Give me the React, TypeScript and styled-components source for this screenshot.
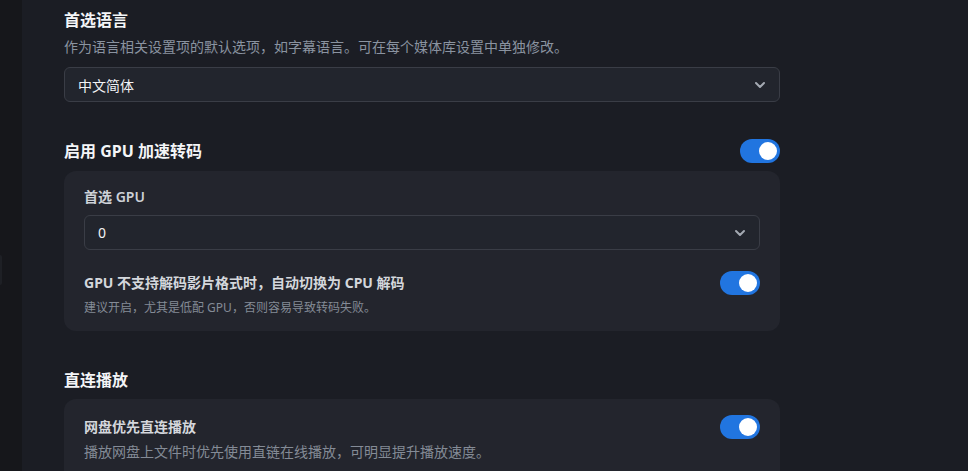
import styled, { createGlobalStyle } from "styled-components";

const GlobalStyle = createGlobalStyle`
  html, body {
    margin: 0;
    padding: 0;
    background: #1b1d24;
  }
  body {
    font-family: "Noto Sans", "Noto Sans CJK SC", sans-serif;
    color: #f2f3f5;
  }
`;

const Page = styled.div`
  display: flex;
  width: 968px;
  height: 471px;
  overflow: hidden;
  background: #1b1d24;
`;

const Sidebar = styled.div`
  width: 22px;
  flex-shrink: 0;
  background: #16171b;
  display: flex;
  flex-direction: column;
`;

const SideItem = styled.div`
  margin-top: 255px;
  width: 2px;
  height: 30px;
  border-radius: 0 3px 3px 0;
  background: #1e2025;
`;

const Main = styled.div`
  padding: 8px 0 0 42px;
  width: 716px;
  display: flex;
  flex-direction: column;

  & > * {
    flex-shrink: 0;
  }
`;

const Heading = styled.h2`
  margin: 0;
  font-size: 16px;
  line-height: 24px;
  font-weight: 700;
  color: #f4f5f7;
`;

const HeadingRow = styled.div`
  display: flex;
  align-items: center;
  justify-content: space-between;
  margin-top: 37px;
`;

const Description = styled.p`
  margin: 6px 0 0;
  font-size: 14px;
  line-height: 18px;
  color: #8a93a0;
`;

const SelectBox = styled.div<{ $mt?: number }>`
  margin-top: ${(p) => p.$mt ?? 11}px;
  height: 35px;
  flex-shrink: 0;
  box-sizing: border-box;
  border: 1px solid #3a3d46;
  border-radius: 6px;
  background: #22252d;
  display: flex;
  align-items: center;
  justify-content: space-between;
  padding: 0 11px 0 13px;
  font-size: 14px;
  color: #f2f3f5;
`;

const Card = styled.div`
  margin-top: 8px;
  background: #23252d;
  border-radius: 12px;
  padding: 17px 20px 14px;
  display: flex;
  flex-direction: column;

  & > * {
    flex-shrink: 0;
  }
`;

const CardLower = styled(Card)`
  margin-top: 7px;
  padding-top: 16px;
  height: 80px;
`;

const FieldLabel = styled.div`
  font-size: 14px;
  line-height: 18px;
  font-weight: 600;
  color: #cdd1d7;
`;

const OptionRow = styled.div<{ $mt?: number }>`
  margin-top: ${(p) => p.$mt ?? 0}px;
  display: flex;
  justify-content: space-between;
  align-items: flex-start;
`;

const OptionText = styled.div`
  display: flex;
  flex-direction: column;
`;

const OptionTitle = styled.div`
  font-size: 14px;
  line-height: 24px;
  font-weight: 700;
  color: #d4d7dc;
`;

const OptionDesc = styled.div<{ $size?: number }>`
  margin-top: 4px;
  font-size: ${(p) => p.$size ?? 12}px;
  line-height: 18px;
  color: #848b96;
`;

const Switch = styled.div`
  width: 40px;
  height: 24px;
  border-radius: 12px;
  background: #2175e0;
  display: flex;
  align-items: center;
  justify-content: flex-end;
  padding: 0 3px;
  box-sizing: border-box;
  flex-shrink: 0;
`;

const Knob = styled.div`
  width: 18px;
  height: 18px;
  border-radius: 50%;
  background: #ffffff;
`;

const Chevron = () => (
  <svg width="16" height="16" viewBox="0 0 24 24" fill="none" stroke="#a4a9b2" strokeWidth="3" strokeLinecap="round" strokeLinejoin="round">
    <path d="M6 9l6 6 6-6" />
  </svg>
);

const Toggle = () => (
  <Switch>
    <Knob />
  </Switch>
);

export default function App() {
  return (
    <Page>
      <GlobalStyle />
      <Sidebar>
        <SideItem />
      </Sidebar>
      <Main>
        <Heading>首选语言</Heading>
        <Description>作为语言相关设置项的默认选项，如字幕语言。可在每个媒体库设置中单独修改。</Description>
        <SelectBox>
          <span>中文简体</span>
          <Chevron />
        </SelectBox>

        <HeadingRow>
          <Heading>启用 GPU 加速转码</Heading>
          <Toggle />
        </HeadingRow>
        <Card>
          <FieldLabel>首选 GPU</FieldLabel>
          <SelectBox $mt={9}>
            <span>0</span>
            <Chevron />
          </SelectBox>
          <OptionRow $mt={21}>
            <OptionText>
              <OptionTitle>GPU 不支持解码影片格式时，自动切换为 CPU 解码</OptionTitle>
              <OptionDesc>建议开启，尤其是低配 GPU，否则容易导致转码失败。</OptionDesc>
            </OptionText>
            <Toggle />
          </OptionRow>
        </Card>

        <HeadingRow>
          <Heading>直连播放</Heading>
        </HeadingRow>
        <CardLower>
          <OptionRow>
            <OptionText>
              <OptionTitle>网盘优先直连播放</OptionTitle>
              <OptionDesc $size={14}>播放网盘上文件时优先使用直链在线播放，可明显提升播放速度。</OptionDesc>
            </OptionText>
            <Toggle />
          </OptionRow>
        </CardLower>
      </Main>
    </Page>
  );
}
